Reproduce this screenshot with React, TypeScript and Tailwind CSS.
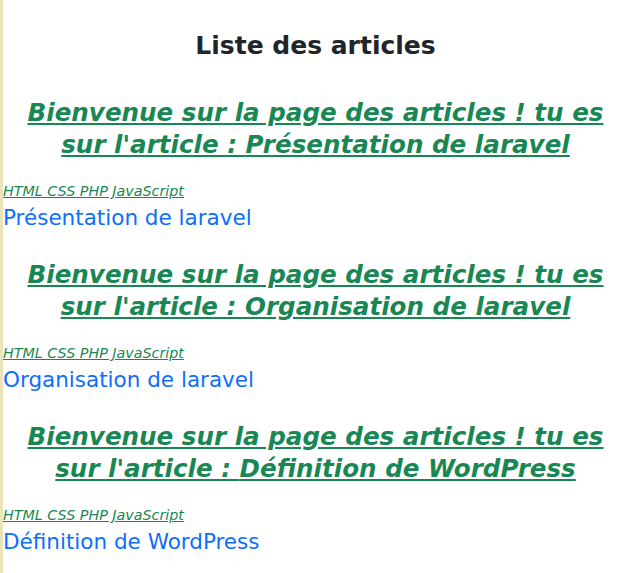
import React from 'react';

const articles = [
  'Présentation de laravel',
  'Organisation de laravel',
  'Définition de WordPress',
];

export default function App() {
  return (
    <div
      className="min-h-[573px] bg-white border-l-[3px] border-[#ece4b9] pr-[6px] pt-[30px]"
      style={{ fontFamily: '"DejaVu Sans", sans-serif' }}
    >
      <h1 className="mb-[35px] text-center text-[25px] font-bold leading-[32px] text-[#212529]">Liste des articles</h1>

      {articles.map((title) => (
        <div key={title}>
          <h2 className="mt-[28px] px-[8px] text-center text-[24.6px] font-bold italic leading-[32px] text-[#198754] underline">
            Bienvenue sur la page des articles ! tu es sur l'article : {title}
          </h2>
          <div className="mt-[21px] text-[14.3px] italic leading-[18px] text-[#198754] underline">
            HTML CSS PHP JavaScript
          </div>
          <div className="mt-[5px] text-[21.5px] leading-[26px] text-[#0d6efd]">{title}</div>
        </div>
      ))}
    </div>
  );
}
